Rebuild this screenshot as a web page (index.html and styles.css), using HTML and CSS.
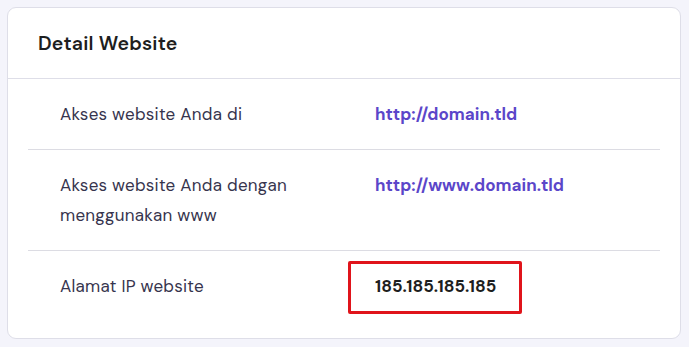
FILE: index.html
```html
<!DOCTYPE html>
<html lang="id">
<head>
<meta charset="utf-8">
<link rel="stylesheet" href="styles.css">
</head>
<body>
<div class="card">
  <div class="card-header">
    <h2 class="title">Detail Website</h2>
  </div>
  <div class="rows">
    <div class="row">
      <div class="label">Akses website Anda di</div>
      <div class="value"><a class="link" href="#">http://domain.tld</a></div>
    </div>
    <div class="row">
      <div class="label">Akses website Anda dengan<br>menggunakan www</div>
      <div class="value"><a class="link" href="#">http://www.domain.tld</a></div>
    </div>
    <div class="row last">
      <div class="label">Alamat IP website</div>
      <div class="value ip"><span class="ip-text">185.185.185.185</span><span class="highlight"></span></div>
    </div>
  </div>
</div>
</body>
</html>
```

FILE: styles.css
```css
html, body {
  margin: 0;
  padding: 0;
  background: #f4f4fb;
}
body {
  font-family: "DM Sans", Inter, "Noto Sans", sans-serif;
  color: #36344d;
}
.card {
  margin: 7px 8px 0 7px;
  background: #ffffff;
  border: 1px solid #dedee8;
  border-radius: 9px;
  height: 332px;
  box-sizing: border-box;
}
.card-header {
  height: 70px;
  border-bottom: 1px solid #dedee8;
  display: flex;
  align-items: center;
  padding-left: 30px;
}
.title {
  margin: 0;
  font-size: 19.5px;
  font-weight: 600;
  color: #1d1e20;
  letter-spacing: 0.2px;
}
.rows {
  padding: 0 20px;
}
.row {
  display: grid;
  grid-template-columns: 315px 1fr;
  padding: 20px 0 20px 32px;
  border-bottom: 1px solid #dcdce3;
  font-size: 17px;
  line-height: 30px;
}
.row.last {
  border-bottom: none;
}
.label {
  color: #36344d;
  font-weight: 400;
  letter-spacing: 0.25px;
}
.link {
  color: #5b46c9;
  font-weight: 700;
  text-decoration: none;
}
.value {
  position: relative;
}
.ip-text {
  font-weight: 700;
  color: #1d1e20;
}
.highlight {
  position: absolute;
  left: -27px;
  top: -10px;
  width: 174px;
  height: 53px;
  box-sizing: border-box;
  border: 3px solid #e0141b;
  border-radius: 2px;
}
```
